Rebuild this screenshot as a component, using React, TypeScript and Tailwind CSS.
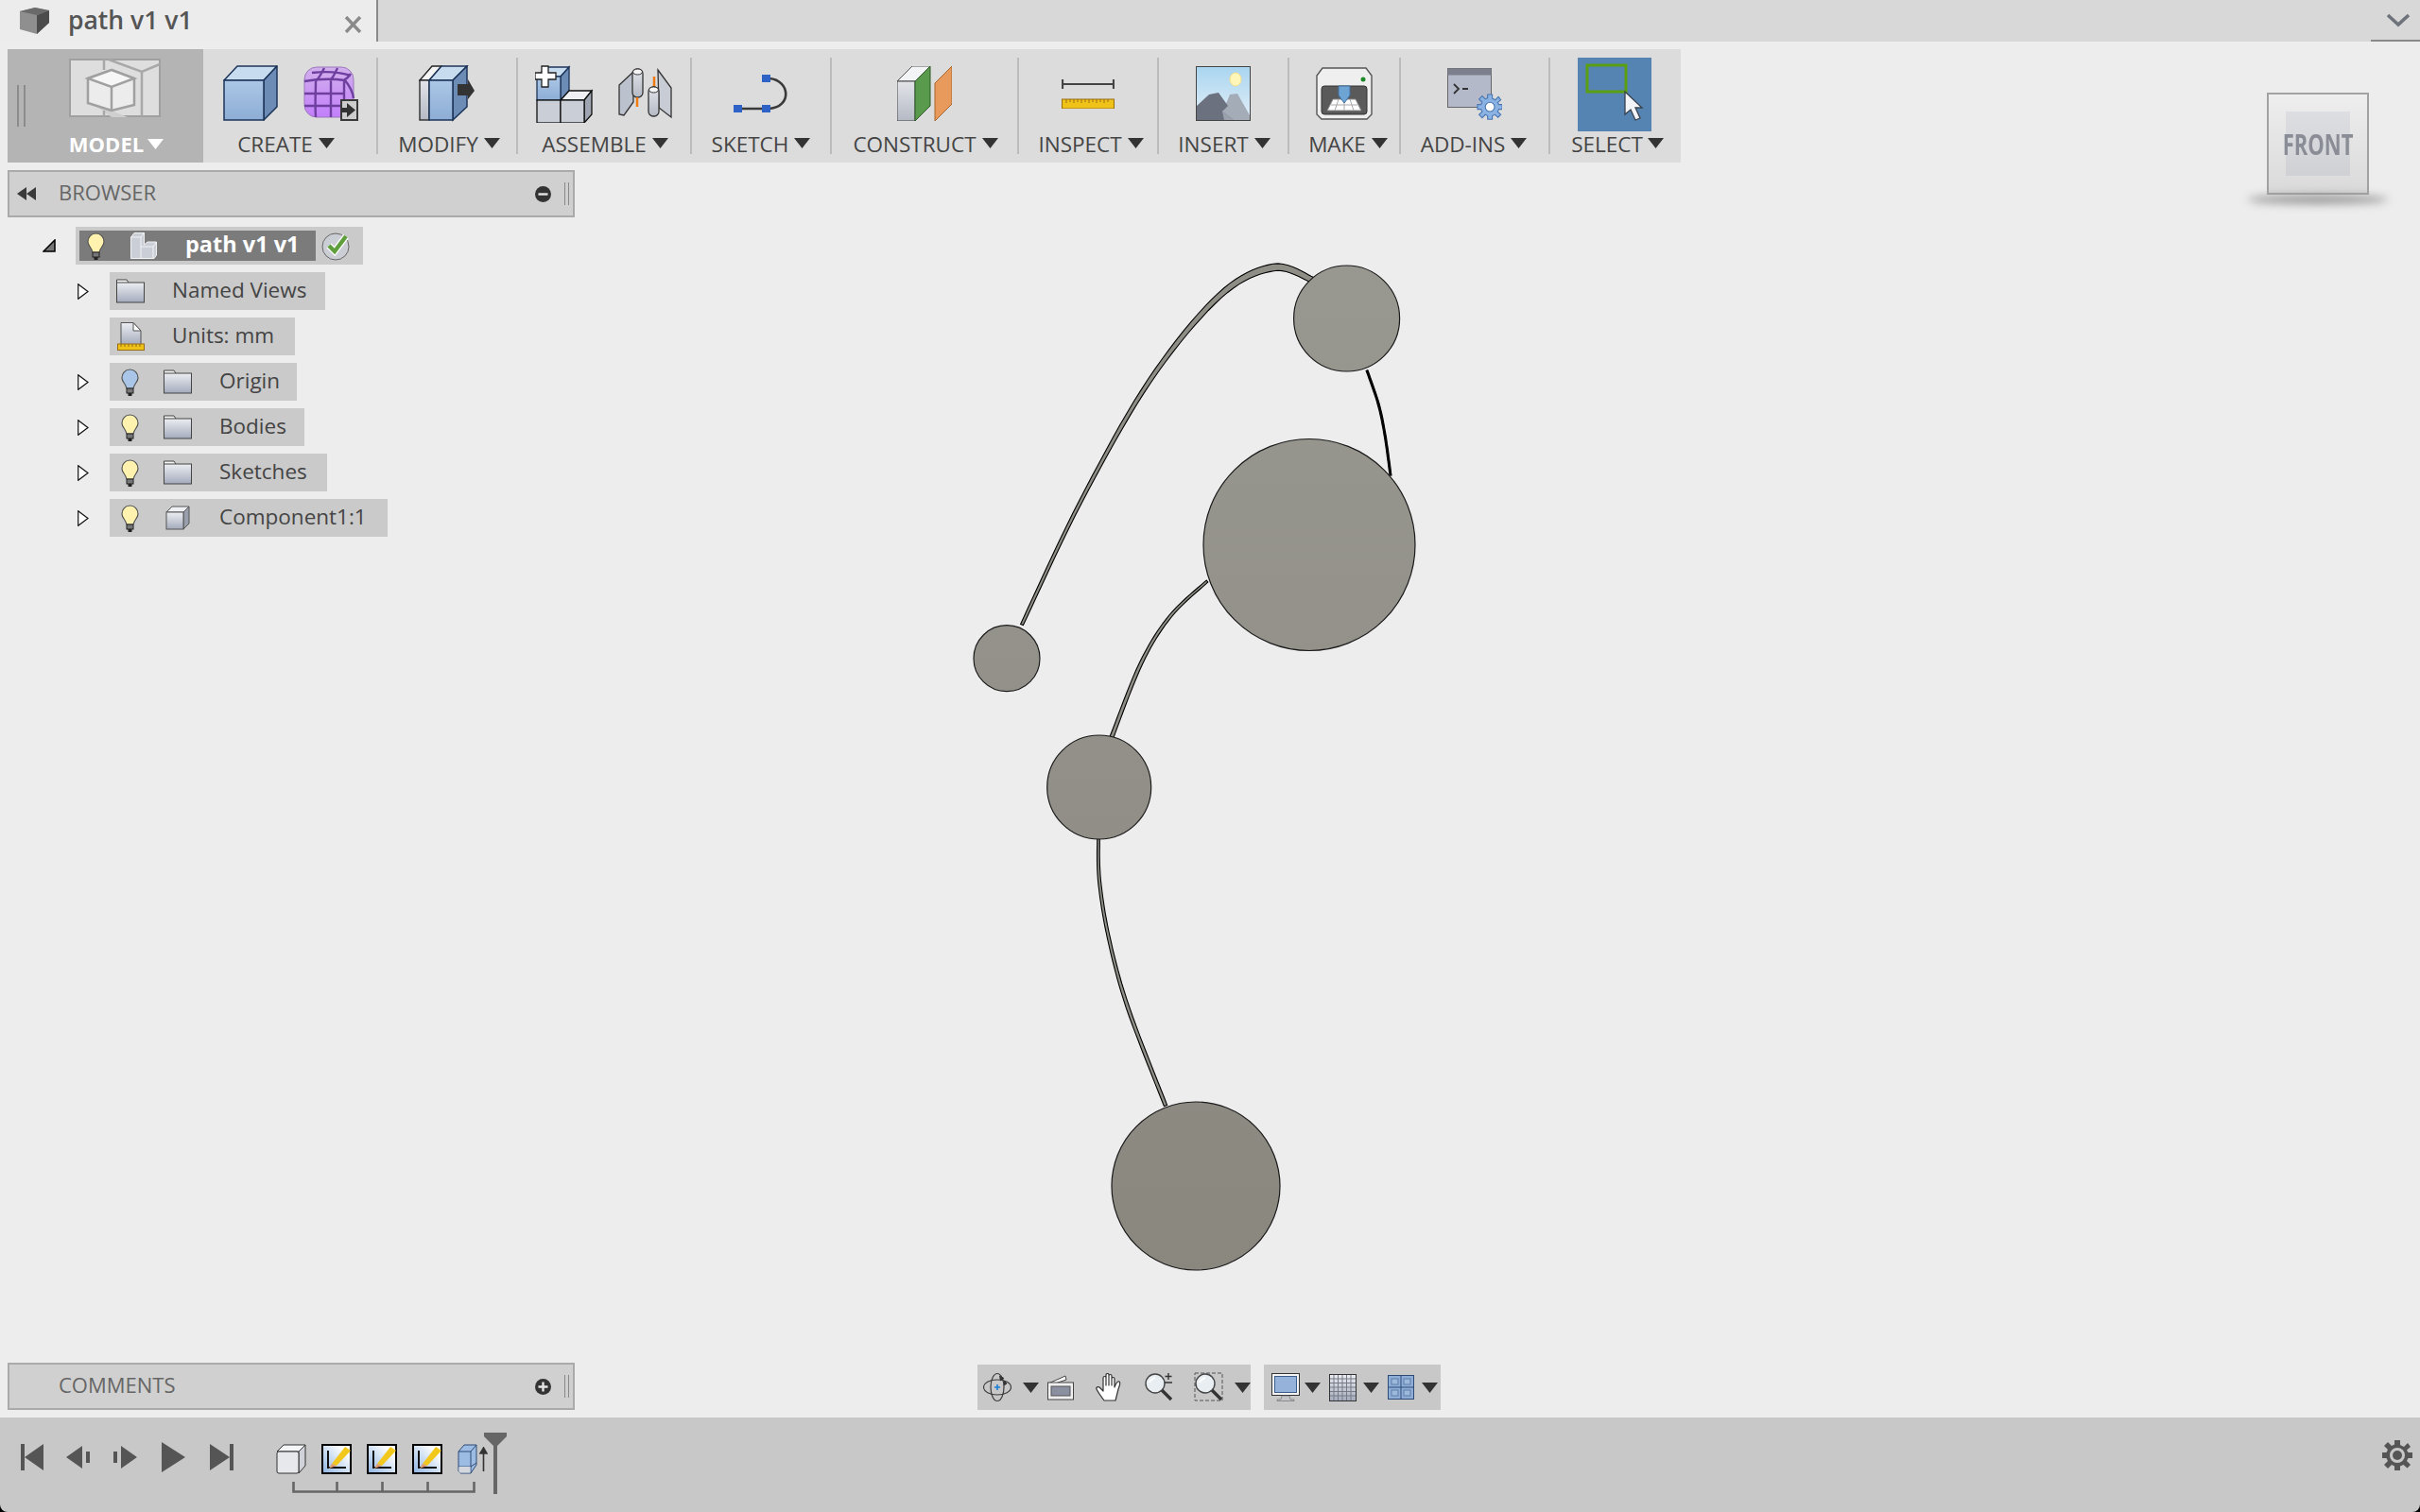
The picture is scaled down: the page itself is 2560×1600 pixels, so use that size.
import React from 'react';

type Pt = [number, number, number];

// builds an outline of a tapered curve out of centre points with a width per point
const tube = (pts: Pt[]) => {
  const s: Pt[] = [];
  for (let i = 0; i < pts.length - 1; i++) {
    const p0 = pts[Math.max(i - 1, 0)], p1 = pts[i], p2 = pts[i + 1], p3 = pts[Math.min(i + 2, pts.length - 1)];
    for (let j = 0; j < 10; j++) {
      const t = j / 10, a = t * t, b = a * t;
      const f = (k: number) => 0.5 * (2 * p1[k] + (p2[k] - p0[k]) * t + (2 * p0[k] - 5 * p1[k] + 4 * p2[k] - p3[k]) * a + (3 * p1[k] - p0[k] - 3 * p2[k] + p3[k]) * b);
      s.push([f(0), f(1), p1[2] + (p2[2] - p1[2]) * t]);
    }
  }
  s.push(pts[pts.length - 1]);
  const left: string[] = [], right: string[] = [];
  s.forEach((p, i) => {
    const q = s[Math.min(i + 1, s.length - 1)], r = s[Math.max(i - 1, 0)];
    const dx = q[0] - r[0], dy = q[1] - r[1], l = Math.hypot(dx, dy) || 1;
    const nx = (-dy / l) * p[2] / 2, ny = (dx / l) * p[2] / 2;
    left.push(`${(p[0] + nx).toFixed(1)} ${(p[1] + ny).toFixed(1)}`);
    right.unshift(`${(p[0] - nx).toFixed(1)} ${(p[1] - ny).toFixed(1)}`);
  });
  return `M${left.join('L')}L${right.join('L')}Z`;
};

const tubes: { pts: Pt[]; fill: string }[] = [
  {
    fill: '#8f8e86',
    pts: [[1081, 661, 3], [1143, 531, 3.5], [1216, 403, 4.5], [1290, 313, 6], [1347, 283, 7.5], [1388, 296, 6]],
  },
  { fill: '#000000', pts: [[1446, 392, 2], [1458, 427, 2], [1465, 460, 2], [1471, 503, 2]] },
  { fill: '#8f8e86', pts: [[1277, 615, 2.5], [1238, 652, 3], [1207, 702, 3.5], [1176, 780, 4]] },
  { fill: '#8f8e86', pts: [[1162, 886, 2.5], [1163, 932, 3], [1173, 993, 3], [1193, 1066, 3.5], [1233, 1170, 3.5]] },
];

const circles = [
  { cx: 1424.6, cy: 337, r: 56 },
  { cx: 1385, cy: 576.5, r: 112 },
  { cx: 1065, cy: 696.7, r: 35 },
  { cx: 1162.7, cy: 833, r: 55 },
  { cx: 1265, cy: 1255, r: 89 },
];

const GEAR = 'M13 0H19V5L23 7L27 3L30 7L26 10.5L27.5 13H32V19H27.5L26 22L30 26L26.5 29.5L22.5 26L19 27.5V32H13V27.5L10 26L6 30L2 26L6 22L4.5 19H0V13H4.5L6 10L2 6L6 2L10 6L13 4.5Z';

const Caret = ({ white = false }: { white?: boolean }) => (
  <svg width="17" height="11" viewBox="0 0 17 11" className="shrink-0">
    <path d="M0 0H17L8.5 11Z" fill={white ? '#ffffff' : '#333333'} />
  </svg>
);

const Grads = () => (
  <svg width="0" height="0" className="absolute">
    <defs>
      <linearGradient id="blueFront" x1="0" y1="0" x2="0" y2="1">
        <stop offset="0" stopColor="#acc7e6" />
        <stop offset="1" stopColor="#8dadd5" />
      </linearGradient>
      <linearGradient id="greyFront" x1="0" y1="0" x2="0" y2="1">
        <stop offset="0" stopColor="#e2e4e9" />
        <stop offset="1" stopColor="#b4b9c4" />
      </linearGradient>
      <linearGradient id="folder" x1="0" y1="0" x2="0" y2="1">
        <stop offset="0" stopColor="#eceef2" />
        <stop offset="1" stopColor="#a3aabb" />
      </linearGradient>
      <linearGradient id="mesh" x1="0" y1="0" x2="0" y2="1">
        <stop offset="0" stopColor="#d2b0ec" />
        <stop offset="1" stopColor="#c27ffb" />
      </linearGradient>
      <linearGradient id="sky" x1="0" y1="0" x2="0" y2="1">
        <stop offset="0" stopColor="#a9d5f0" />
        <stop offset="1" stopColor="#e4eff7" />
      </linearGradient>
      <linearGradient id="sketchBg" x1="1" y1="0" x2="0" y2="1">
        <stop offset="0.2" stopColor="#ffffff" />
        <stop offset="1" stopColor="#8db4e2" />
      </linearGradient>
    </defs>
  </svg>
);

const ModelIcon = () => (
  <svg width="97" height="62" viewBox="0 0 97 62">
    <rect x="1" y="1" width="95" height="60" fill="#dedede" stroke="#a0a0a0" strokeWidth="2" />
    <path d="M24 47L45 55L62 62H45Z" fill="#cfcfcf" />
    <path d="M37 1V12M37 55V61M42 1L77 14L96 6M77 14V61" fill="none" stroke="#a8a8a8" strokeWidth="2.5" />
    <path d="M45 12L69 21V49L45 55L20 47V21Z" fill="#ececec" stroke="#a0a0a0" strokeWidth="2.5" />
    <path d="M45 12L69 21L45 30L20 21Z" fill="#f6f6f6" stroke="#a0a0a0" strokeWidth="2.5" />
    <path d="M45 30V55" stroke="#a0a0a0" strokeWidth="2.5" />
  </svg>
);

const BoxIcon = () => (
  <svg width="60" height="60" viewBox="0 0 60 60">
    <path d="M2 16L16 1H58L44 16Z" fill="#c8dcf0" stroke="#1c3458" strokeWidth="1.5" strokeLinejoin="round" />
    <path d="M44 16L58 1V44L44 58Z" fill="#6c8cb6" stroke="#1c3458" strokeWidth="1.5" strokeLinejoin="round" />
    <rect x="2" y="16" width="42" height="42" fill="url(#blueFront)" stroke="#1c3458" strokeWidth="1.5" />
  </svg>
);

const MeshIcon = () => (
  <svg width="58" height="58" viewBox="0 0 58 58">
    <rect x="1" y="1" width="52" height="53" rx="13" fill="url(#mesh)" stroke="#9a78bc" />
    <path d="M1 16C18 13 30 13 44 15C48 20 52 26 53 34M9 7C26 5 38 6 50 10M13 16C13 28 12 40 13 54M29 14V54M43 15V44M1 29H43M1 42H42M22 2C20 6 17 12 13 16M36 2C34 6 32 11 29 14M50 8C48 11 46 13 43 15" fill="none" stroke="#6f3fa0" strokeWidth="2.4" />
    <rect x="40" y="36" width="17" height="21" fill="#cdcdcd" stroke="#3a3a3a" strokeWidth="2" />
    <path d="M40 44H46V39L55 46.5L46 54V49H40Z" fill="#333333" />
  </svg>
);

const ModifyIcon = () => (
  <svg width="60" height="60" viewBox="0 0 60 60">
    <path d="M1 16L14 1H24L11 16Z" fill="#f4f4f4" stroke="#222222" strokeWidth="1.3" />
    <rect x="1" y="16" width="10" height="42" fill="url(#greyFront)" stroke="#222222" strokeWidth="1.3" />
    <path d="M11 16L24 1H51L36 16Z" fill="#c8dcf0" stroke="#1c3458" strokeWidth="1.5" />
    <path d="M36 16L51 1V44L36 58Z" fill="#6c8cb6" stroke="#1c3458" strokeWidth="1.5" />
    <rect x="11" y="16" width="25" height="42" fill="url(#blueFront)" stroke="#1c3458" strokeWidth="1.5" />
    <path d="M41 20H52V15L59 27L52 36V32H41Z" fill="#333333" />
  </svg>
);

const AssembleIcon = () => (
  <svg width="62" height="62" viewBox="0 0 62 62">
    <path d="M2 13L12 3H36L27 13Z" fill="#c8dcf0" stroke="#1c3458" strokeWidth="1.3" />
    <path d="M27 13L36 3V28L27 38Z" fill="#6c8cb6" stroke="#1c3458" strokeWidth="1.3" />
    <rect x="2" y="13" width="25" height="25" fill="url(#blueFront)" stroke="#1c3458" strokeWidth="1.3" />
    <path d="M27 38L36 28H60L52 38Z" fill="#eef0f3" stroke="#111111" strokeWidth="1.3" />
    <path d="M52 38L60 28V53L52 62Z" fill="#9fa6b2" stroke="#111111" strokeWidth="1.3" />
    <rect x="2" y="38" width="25" height="24" fill="#c9ced7" stroke="#111111" strokeWidth="1.3" />
    <rect x="27" y="38" width="25" height="24" fill="#c9ced7" stroke="#111111" strokeWidth="1.3" />
    <path d="M7 1H14V8H22V15H14V23H7V15H0V8H7Z" fill="#ffffff" stroke="#222222" strokeWidth="1.3" transform="translate(0 1)" />
  </svg>
);

const HingeIcon = () => (
  <svg width="58" height="56" viewBox="0 0 58 56">
    <path d="M1 19L16 5V37L6 51L1 50Z" fill="#bcc2cd" stroke="#333333" strokeWidth="1.3" />
    <rect x="15" y="2" width="11" height="30" rx="5" fill="url(#greyFront)" stroke="#333333" strokeWidth="1.3" />
    <ellipse cx="20.5" cy="5" rx="5" ry="3" fill="#f4f4f4" stroke="#333333" />
    <path d="M20 32V42" stroke="#f07a10" strokeWidth="2.5" />
    <path d="M38 10V24" stroke="#f07a10" strokeWidth="2.5" />
    <path d="M42 3L56 22V53L43 43Z" fill="#c8ccd4" stroke="#333333" strokeWidth="1.3" />
    <rect x="32" y="21" width="11" height="31" rx="5" fill="url(#greyFront)" stroke="#333333" strokeWidth="1.3" />
    <ellipse cx="37.5" cy="24" rx="5" ry="3" fill="#f4f4f4" stroke="#333333" />
  </svg>
);

const SketchIcon = () => (
  <svg width="58" height="40" viewBox="0 0 58 40">
    <path d="M8 36H30M38 4C60 6 62 34 38 36" fill="none" stroke="#3a3a3a" strokeWidth="2.6" />
    <rect x="0" y="32" width="9" height="8" fill="#2f62c6" />
    <rect x="30" y="32" width="9" height="8" fill="#2f62c6" />
    <rect x="30" y="0" width="9" height="8" fill="#2f62c6" />
  </svg>
);

const ConstructIcon = () => (
  <svg width="58" height="58" viewBox="0 0 58 58">
    <path d="M0 16L16 0H35L19 16Z" fill="#f3f4f6" stroke="#555555" />
    <rect x="0" y="16" width="19" height="42" fill="url(#greyFront)" stroke="#444444" />
    <path d="M19 16L35 0V42L19 58Z" fill="#5a9a4c" stroke="#2f5a28" />
    <path d="M40 18L58 0V40L40 58Z" fill="#e89a5c" stroke="#a86428" />
  </svg>
);

const InspectIcon = () => (
  <svg width="56" height="31" viewBox="0 0 56 31">
    <path d="M1 0V10M55 0V10M1 5H55" stroke="#444444" strokeWidth="2.2" fill="none" />
    <rect x="0.5" y="21" width="55" height="10" fill="#efc21a" stroke="#9a6c10" />
    <path d="M5 21V25M9 21V24M13 21V25M17 21V24M21 21V25M25 21V24M29 21V25M33 21V24M37 21V25M41 21V24M45 21V25M49 21V24" stroke="#9a6c10" />
  </svg>
);

const InsertIcon = () => (
  <svg width="58" height="58" viewBox="0 0 58 58">
    <rect x="0.5" y="0.5" width="57" height="57" fill="url(#sky)" stroke="#444444" />
    <ellipse cx="42" cy="14" rx="6" ry="7" fill="#fff6b8" stroke="#f4e08a" />
    <path d="M25 57L36 30L44 29L57 52V57Z" fill="#a4acb8" />
    <path d="M1 42L14 30L24 28L34 42L28 48L40 57H1Z" fill="#6c7180" />
    <path d="M28 48L40 57H30Z" fill="#9aa0ac" />
  </svg>
);

const MakeIcon = () => (
  <svg width="60" height="56" viewBox="0 0 60 56">
    <path d="M7 1H53L59 9V50L54 55H6L1 50V9Z" fill="#efefef" stroke="#555555" strokeWidth="1.4" />
    <circle cx="50" cy="13" r="2.5" fill="#1f8a2a" />
    <rect x="6" y="20" width="48" height="30" rx="3" fill="#5a5a5a" stroke="#333333" />
    <path d="M12 46L18 34H42L48 46Z" fill="#ffffff" stroke="#888888" />
    <path d="M16 40H44M24 34L20 46M36 34L40 46M30 34V46" stroke="#aaaaaa" />
    <path d="M24 20H36V30L30 38L24 30Z" fill="#6ea4d4" stroke="#3e6e9e" />
  </svg>
);

const AddInsIcon = () => (
  <svg width="58" height="55" viewBox="0 0 58 55">
    <rect x="0.5" y="0.5" width="46" height="41" fill="#b4b9c9" stroke="#666666" />
    <rect x="0.5" y="0.5" width="46" height="7" fill="#7c808c" />
    <path d="M7 17L12 22L7 27M16 22H22" fill="none" stroke="#333333" strokeWidth="1.8" />
    <g transform="translate(32 28) scale(0.82)">
      <path d={GEAR} fill="#8ab2e2" stroke="#4a78b4" strokeWidth="1.4" />
      <circle cx="16" cy="16" r="6" fill="#ffffff" stroke="#4a78b4" strokeWidth="1.4" />
    </g>
  </svg>
);

const SelectIcon = () => (
  <svg width="78" height="78" viewBox="0 0 78 78">
    <rect x="10" y="8" width="41" height="28" fill="none" stroke="#5a9e12" strokeWidth="3" />
    <path d="M50 36V60L56 55L61 66L66 64L61 53H68Z" fill="#f2f4f8" stroke="#39424e" strokeWidth="1.3" />
  </svg>
);

const Bulb = ({ color = '#fff2ae' }: { color?: string }) => (
  <svg width="19" height="29" viewBox="0 0 19 29" className="shrink-0">
    <path d="M9.5 1C4.5 1 1 5 1 10C1 14 5 16 6 21H13C14 16 18 14 18 10C18 5 14.5 1 9.5 1Z" fill={color} stroke="#555555" strokeWidth="1.2" />
    <rect x="6" y="21" width="7" height="5" fill="#777777" stroke="#222222" />
    <rect x="7.5" y="26" width="4" height="3" fill="#222222" />
  </svg>
);

const Folder = () => (
  <svg width="30" height="26" viewBox="0 0 30 26" className="shrink-0">
    <path d="M0.5 4V1H11L13 4" fill="#f4f4f4" stroke="#444444" />
    <rect x="0.5" y="4" width="29" height="21" fill="url(#folder)" stroke="#444444" />
  </svg>
);

const Cube = () => (
  <svg width="26" height="26" viewBox="0 0 26 26" className="shrink-0">
    <path d="M1 7L7 1H25L19 7Z" fill="#eff0f3" stroke="#555555" />
    <path d="M19 7L25 1V19L19 25Z" fill="#999fac" stroke="#555555" />
    <rect x="1" y="7" width="18" height="18" fill="url(#folder)" stroke="#555555" />
  </svg>
);

const DocIcon = () => (
  <svg width="29" height="30" viewBox="0 0 29 30" className="shrink-0">
    <path d="M4 0.5H17L25 9V24H4Z" fill="url(#folder)" stroke="#555555" />
    <path d="M17 0.5V9H25Z" fill="#ffffff" stroke="#555555" />
    <rect x="0.5" y="23" width="28" height="6.5" fill="#efc21a" stroke="#9a6c10" />
    <path d="M4 23V26M8 23V26M12 23V26M16 23V26M20 23V26M24 23V26" stroke="#9a6c10" />
  </svg>
);

const RootIcon = () => (
  <svg width="28" height="28" viewBox="0 0 28 28" className="shrink-0">
    <path d="M0.5 5L4 0.5H14.5V13L18 10H27.5V24L25 27.5H0.5Z" fill="#c9ced7" stroke="#f2f2f2" />
    <path d="M0.5 5H11L14.5 0.5M11 5V27.5M11 15H24L27.5 10M24 15V27.5" fill="none" stroke="#f2f2f2" />
  </svg>
);

const CheckBadge = () => (
  <svg width="32" height="32" viewBox="0 0 32 32" className="shrink-0">
    <circle cx="15" cy="17" r="14" fill="#ccced6" stroke="#666666" />
    <path d="M8 16L14 22L26 6" fill="none" stroke="#ffffff" strokeWidth="7" />
    <path d="M8 16L14 22L26 6" fill="none" stroke="#5f9e3c" strokeWidth="4.4" />
  </svg>
);

const Expander = () => (
  <svg width="12" height="17" viewBox="0 0 12 17">
    <path d="M0.7 0.7L11 8.5L0.7 16.3Z" fill="#ffffff" stroke="#111111" strokeWidth="1.2" />
  </svg>
);

const OrbitIcon = () => (
  <svg width="32" height="32" viewBox="0 0 32 32" className="shrink-0">
    <ellipse cx="15" cy="16" rx="14.5" ry="8" fill="none" stroke="#3c3c3c" strokeWidth="1.2" />
    <ellipse cx="15" cy="16" rx="7" ry="14.5" fill="none" stroke="#3c3c3c" strokeWidth="1.2" />
    <path d="M15 13V19M12 16H18" stroke="#1a7fd8" strokeWidth="1.6" />
    <path d="M17 4L22 6.5L18 9M22 9L25 12L22 14" fill="#333333" stroke="#333333" />
  </svg>
);

const LookIcon = () => (
  <svg width="28" height="28" viewBox="0 0 28 28" className="shrink-0">
    <path d="M1 10L19 2L20 6L8 10Z" fill="#ffffff" stroke="#444444" />
    <rect x="0.5" y="9" width="27" height="18" fill="#f0f0f0" stroke="#444444" />
    <rect x="4" y="13" width="20" height="10" fill="#8a90a0" stroke="#555555" />
  </svg>
);

const HandIcon = () => (
  <svg width="30" height="30" viewBox="0 0 30 30" className="shrink-0">
    <path d="M9 29C6 25 3 21 1 17C0 15 3 14 4 15L8 19V5C8 3 11 3 11 5V13V2C11 0 14 0 14 2V13V3C14 1 17 1 17 3V13V6C17 4 20 4 20 6L20 15C21 12 23 8 25 9C27 10 25 14 24 17C23 21 22 25 21 29Z" fill="#ffffff" stroke="#333333" strokeWidth="1.2" strokeLinejoin="round" />
  </svg>
);

const ZoomIcon = ({ plus = false, box = false }: { plus?: boolean; box?: boolean }) => (
  <svg width="32" height="32" viewBox="0 0 32 32" className="shrink-0">
    {box && <rect x="1" y="1" width="29" height="29" fill="none" stroke="#555555" strokeDasharray="4 2" />}
    <path d="M19 19L29 29" stroke="#333333" strokeWidth="3.4" />
    <circle cx="12" cy="12" r="10" fill="#e8eef2" stroke="#444444" strokeWidth="1.4" />
    <path d="M6 11C7 8 9 7 12 6" stroke="#ffffff" strokeWidth="2" fill="none" />
    {plus && <path d="M26 1V8M22.5 4.5H29.5M22 11H30" stroke="#333333" strokeWidth="1.4" fill="none" />}
  </svg>
);

const MonitorIcon = () => (
  <svg width="30" height="30" viewBox="0 0 30 30" className="shrink-0">
    <rect x="0.5" y="0.5" width="29" height="23" fill="#f4f4f4" stroke="#333333" />
    <rect x="3.5" y="3.5" width="23" height="17" fill="#94b2da" stroke="#3c5c8a" />
    <path d="M11 24H19L20 28H24V29.5H6V28H10Z" fill="#c2c4c8" stroke="#666666" strokeWidth="0.6" />
  </svg>
);

const GridIcon = () => (
  <svg width="29" height="29" viewBox="0 0 29 29" className="shrink-0">
    <rect x="0.5" y="0.5" width="28" height="28" fill="url(#folder)" stroke="#333333" />
    <path d="M5 1V28M9.5 1V28M14 1V28M18.5 1V28M23 1V28M1 5H28M1 9.5H28M1 14H28M1 18.5H28M1 23H28" stroke="#777a86" />
  </svg>
);

const LayoutIcon = () => (
  <svg width="28" height="26" viewBox="0 0 28 26" className="shrink-0">
    <rect x="0.5" y="0.5" width="27" height="25" fill="#8eaed8" stroke="#2f4a74" />
    <path d="M14 1V25M1 13H27" stroke="#2f4a74" />
    <rect x="4" y="4" width="7" height="6" fill="#9cb8da" stroke="#5f7ea6" />
    <rect x="17" y="4" width="7" height="6" fill="#9cb8da" stroke="#5f7ea6" />
    <rect x="4" y="16" width="7" height="6" fill="#9cb8da" stroke="#5f7ea6" />
    <rect x="17" y="16" width="7" height="6" fill="#9cb8da" stroke="#5f7ea6" />
  </svg>
);

const SketchStep = () => (
  <svg width="32" height="32" viewBox="0 0 32 32" className="shrink-0">
    <rect x="1" y="1" width="30" height="30" fill="url(#sketchBg)" stroke="#000000" strokeWidth="2" />
    <path d="M7 7V25H26" fill="none" stroke="#111111" strokeWidth="2" />
    <path d="M11 21L25 3L31 7L16 23Z" fill="#f2c81c" />
    <path d="M11 21L16 23L8 26Z" fill="#e0996c" />
  </svg>
);

const Panel = ({ title, sign, arrows }: { title: string; sign: string; arrows?: boolean }) => (
  <div className="flex h-[50px] w-[600px] items-center border-2 border-[#aaaaaa] bg-[#d0d0d0] text-[22px] text-[#666666]">
    <div className="flex w-[52px] justify-center pr-[16px]">
      {arrows && (
        <svg width="20" height="14" viewBox="0 0 20 14">
          <path d="M0 7L10 0V14ZM10 7L20 0V14Z" fill="#3a3a3a" />
        </svg>
      )}
    </div>
    <span className="-mt-[3px]">{title}</span>
    <svg width="17" height="17" viewBox="0 0 17 17" className="ml-auto">
      <circle cx="8.5" cy="8.5" r="8.5" fill="#333333" />
      <path d={sign === '+' ? 'M3.5 8.5H13.5M8.5 3.5V13.5' : 'M3.5 8.5H13.5'} stroke="#e4e4e4" strokeWidth="2.4" />
    </svg>
    <div className="ml-[14px] mr-[4px] h-[24px] w-[5px] border-x border-[#888888]" />
  </div>
);

const treeRows = [
  { name: 'Named Views', icon: <Folder />, width: 228, arrow: true },
  { name: 'Units: mm', icon: <DocIcon />, width: 196, arrow: false },
  { name: 'Origin', icon: <Folder />, bulb: '#a9c6e8', width: 198, arrow: true },
  { name: 'Bodies', icon: <Folder />, bulb: '#fff2ae', width: 206, arrow: true },
  { name: 'Sketches', icon: <Folder />, bulb: '#fff2ae', width: 230, arrow: true },
  { name: 'Component1:1', icon: <Cube />, bulb: '#fff2ae', width: 294, arrow: true },
];

const tools = [
  { label: 'CREATE', width: 185, icon: <div className="flex items-center gap-[26px]"><BoxIcon /><MeshIcon /></div>, shift: 'pr-[8px]' },
  { label: 'MODIFY', width: 148, icon: <ModifyIcon />, shift: 'pl-[4px]' },
  { label: 'ASSEMBLE', width: 184, icon: <div className="flex items-center gap-[26px]"><AssembleIcon /><HingeIcon /></div>, shift: 'pl-[2px]' },
  { label: 'SKETCH', width: 148, icon: <SketchIcon />, shift: 'pl-[0px]' },
  { label: 'CONSTRUCT', width: 198, icon: <ConstructIcon />, shift: 'pl-[2px]' },
  { label: 'INSPECT', width: 148, icon: <InspectIcon />, shift: 'pl-[6px]' },
  { label: 'INSERT', width: 138, icon: <InsertIcon />, shift: 'pl-[2px]' },
  { label: 'MAKE', width: 118, icon: <MakeIcon />, shift: 'pl-[8px]' },
  { label: 'ADD-INS', width: 158, icon: <AddInsIcon />, shift: 'pr-[2px]' },
];

const Tool = ({ label, width, icon, shift }: { label: string; width: number; icon: React.ReactNode; shift: string }) => (
  <div style={{ width }} className="flex h-[102px] flex-col items-center border-r-2 border-[#bcbcbc]">
    <div className="flex h-[76px] shrink-0 items-center">{icon}</div>
    <div className={`mt-[4px] flex h-[24px] shrink-0 items-center gap-[6px] text-[22.5px] text-[#444444] ${shift}`}>
      <span>{label}</span>
      <div className="-mt-[3px]"><Caret /></div>
    </div>
  </div>
);

export default function App() {
  return (
    <div className="flex h-[1600px] w-[2560px] flex-col overflow-hidden bg-black font-['Open_Sans',sans-serif]">
      <Grads />

      {/* tab bar */}
      <div className="flex h-[44px] bg-[#d8d8d8]">
        <div className="flex w-[400px] items-center border-r-2 border-[#8a8a8a] bg-[#ececec] pl-[20px] pr-[15px]">
          <svg width="33" height="30" viewBox="0 0 33 30">
            <path d="M1 5L17 1L32 4V17L19 29L1 24Z" fill="#8f8f8f" />
            <path d="M19 9L32 4V17L19 29Z" fill="#4c4c4c" />
            <path d="M1 5L17 1L32 4L19 9Z" fill="#6a6a6a" />
          </svg>
          <span className="ml-[19px] text-[26.5px] font-semibold text-[#555555]">path v1 v1</span>
          <svg width="19" height="18" viewBox="0 0 19 18" className="ml-auto mt-[8px]">
            <path d="M2 1L17 17M17 1L2 17" stroke="#8a8a8a" strokeWidth="3.4" />
          </svg>
        </div>
        <div className="ml-auto flex w-[52px] items-center justify-center border-b-2 border-[#8a8a8a] pl-[6px]">
          <svg width="26" height="15" viewBox="0 0 26 15">
            <path d="M2 2L13 12L24 2" fill="none" stroke="#6f737c" strokeWidth="3.6" />
          </svg>
        </div>
      </div>

      {/* workspace */}
      <div className="relative flex flex-1 flex-col justify-between bg-[#ededed] pb-[8px] pl-[8px] pt-[8px]">
        <svg width="2560" height="1456" viewBox="0 44 2560 1456" className="absolute left-0 top-0">
          <defs>
            <linearGradient id="body" gradientUnits="userSpaceOnUse" x1="0" y1="280" x2="0" y2="1344">
              <stop offset="0" stopColor="#999890" />
              <stop offset="1" stopColor="#8a877f" />
            </linearGradient>
          </defs>
          {tubes.map((t, i) => (
            <path key={i} d={tube(t.pts)} fill={t.fill} stroke="#000000" strokeWidth="1.1" />
          ))}
          {circles.map((c, i) => (
            <circle key={i} {...c} fill="url(#body)" stroke="#1a1a1a" strokeWidth="1.2" />
          ))}
        </svg>

        <div className="relative flex flex-col gap-[8px]">
          {/* toolbar */}
          <div className="flex h-[120px] w-[1770px] items-center bg-[#dcdcdc]">
            <div className="flex h-[120px] w-[207px] bg-[#b4b4b4] pl-[10px]">
              <div className="mt-[38px] h-[44px] w-[9px] border-x-2 border-[#8c8c8c]" />
              <div className="flex flex-1 flex-col items-center pt-[10px]">
                <ModelIcon />
                <div className="mt-[16px] flex h-[24px] items-center gap-[4px] pl-[4px] text-[22px] font-bold text-white">
                  <span>MODEL</span>
                  <Caret white />
                </div>
              </div>
            </div>
            {tools.map((t) => (
              <Tool key={t.label} {...t} />
            ))}
            <div className="flex h-[102px] w-[136px] flex-col items-center">
              <div className="flex h-[78px] w-[78px] shrink-0 bg-[#5584b2]">
                <SelectIcon />
              </div>
              <div className="mt-[2px] flex h-[24px] shrink-0 items-center gap-[5px] pl-[6px] text-[22.5px] text-[#444444]">
                <span>SELECT</span>
                <div className="-mt-[3px]"><Caret /></div>
              </div>
            </div>
          </div>

          {/* browser */}
          <Panel title="BROWSER" sign="-" arrows />
          <div className="flex flex-col gap-[8px] pt-[2px] text-[22.5px] text-[#444444]">
            <div className="flex items-center pl-[37px]">
              <svg width="14" height="14" viewBox="0 0 14 14">
                <path d="M13 1V13H1Z" fill="#777777" stroke="#000000" strokeWidth="1.5" />
              </svg>
              <div className="ml-[21px] flex h-[40px] w-[304px] items-center bg-[#cacaca] pl-[4px] pr-[12px]">
                <div className="flex h-[32px] w-[250px] items-center bg-[#7b7b7b] pl-[8px] text-[23.5px] font-bold text-white">
                  <Bulb />
                  <div className="ml-[27px]"><RootIcon /></div>
                  <span className="ml-[30px] -mt-[3px]">path v1 v1</span>
                </div>
                <div className="ml-[6px]"><CheckBadge /></div>
              </div>
            </div>
            {treeRows.map((r) => (
              <div key={r.name} className="flex items-center pl-[74px]">
                <div className="w-[34px]">{r.arrow && <Expander />}</div>
                <div style={{ width: r.width }} className="flex h-[40px] items-center bg-[#cacaca] pl-[7px]">
                  {r.bulb && (
                    <div className="ml-[5px] mr-[26px]"><Bulb color={r.bulb} /></div>
                  )}
                  <div className="flex w-[30px] justify-center">{r.icon}</div>
                  <span className="ml-[29px] -mt-[3px]">{r.name}</span>
                </div>
              </div>
            ))}
          </div>
        </div>

        <div className="relative">
          <Panel title="COMMENTS" sign="+" />
        </div>

        {/* view cube */}
        <div className="absolute left-[2398px] top-[54px] flex h-[108px] w-[108px] items-center justify-center border-2 border-[#a2a2a2] bg-gradient-to-b from-[#eeeeee] to-[#dadada]">
          <div className="flex h-[68px] w-[68px] items-center justify-center bg-gradient-to-b from-[#dcdee2] to-[#cfd1d5]">
            <span className="scale-y-135 text-[22px] font-bold text-[#8a8d95]">FRONT</span>
          </div>
          <div className="absolute left-[-22px] top-[106px] h-[10px] w-[148px] rounded-[50%] bg-[#9a9a9a] blur-[5px]" />
        </div>

        {/* navigation bar */}
        <div className="absolute left-[1034px] top-[1400px] flex gap-[14px]">
          <div className="flex h-[48px] w-[289px] items-center bg-[#c8c8c8] pl-[6px]">
            <OrbitIcon />
            <div className="ml-[10px]"><Caret /></div>
            <div className="ml-[9px]"><LookIcon /></div>
            <div className="ml-[23px]"><HandIcon /></div>
            <div className="ml-[21px]"><ZoomIcon plus /></div>
            <div className="ml-[21px]"><ZoomIcon box /></div>
            <div className="ml-[11px]"><Caret /></div>
          </div>
          <div className="flex h-[48px] w-[187px] items-center bg-[#c8c8c8] pl-[8px]">
            <MonitorIcon />
            <div className="ml-[5px]"><Caret /></div>
            <div className="ml-[9px]"><GridIcon /></div>
            <div className="ml-[7px]"><Caret /></div>
            <div className="ml-[9px]"><LayoutIcon /></div>
            <div className="ml-[8px]"><Caret /></div>
          </div>
        </div>
      </div>

      {/* timeline */}
      <div className="relative flex h-[100px] items-start rounded-b-[8px] bg-[#c8c8c8] pl-[22px] pt-[26px]">
        <svg width="225" height="32" viewBox="0 0 225 32" className="shrink-0">
          <g fill="#555555">
            <path d="M0 2H4V30H0ZM24 2V30L4 16Z" />
            <path d="M48 16L65 4V28ZM69 10H73V22H69Z" />
            <path d="M98 10H102V22H98ZM106 4L123 16L106 28Z" />
            <path d="M149 0L174 16L149 32Z" />
            <path d="M200 2L221 16L200 30ZM221 2H225V30H221Z" />
          </g>
        </svg>
        <div className="ml-[45px] flex flex-col">
          <div className="mt-[2px] flex items-center gap-[16px]">
            <svg width="32" height="32" viewBox="0 0 32 32">
              <path d="M1 8L8 1H31L24 8Z" fill="#f5f6f8" stroke="#333333" />
              <path d="M24 8L31 1V23L24 31Z" fill="#cfd2d8" stroke="#333333" />
              <rect x="1" y="8" width="23" height="23" rx="2" fill="#e6e8ec" stroke="#333333" />
            </svg>
            <SketchStep />
            <SketchStep />
            <SketchStep />
            <div className="flex items-center gap-[2px]">
              <svg width="21" height="32" viewBox="0 0 21 32">
                <path d="M1 8L7 1H20V22L14 31H3L1 29Z" fill="#9dbce4" stroke="#2f4a74" />
                <path d="M1 24H14L20 20M14 8V31M1 8H14L20 1" fill="none" stroke="#2f4a74" />
                <rect x="1.5" y="24" width="12" height="6.5" fill="#d4d8de" />
              </svg>
              <svg width="9" height="26" viewBox="0 0 9 26">
                <path d="M4.5 26V1M1 7L4.5 1L8 7Z" stroke="#333333" strokeWidth="1.6" fill="#333333" />
              </svg>
            </div>
          </div>
          <svg width="194" height="12" viewBox="0 0 194 12" className="ml-[17px] mt-[8px]">
            <path d="M1.5 0V10.5H192.5V0M47.5 0V10M95.5 0V10M143.5 0V10" fill="none" stroke="#666666" strokeWidth="2.6" />
          </svg>
        </div>
        <svg width="24" height="65" viewBox="0 0 24 65" className="absolute left-[512px] top-[16px]">
          <path d="M0 0H24V4L14 14V65H10V14L0 4Z" fill="#666666" />
        </svg>
        <svg width="32" height="32" viewBox="0 0 32 32" className="ml-auto mr-[8px] -mt-[2px]">
          <path d={GEAR} fill="#555555" />
          <circle cx="16" cy="16" r="8" fill="#c8c8c8" />
          <circle cx="16" cy="16" r="5" fill="#555555" />
        </svg>
      </div>
    </div>
  );
}
